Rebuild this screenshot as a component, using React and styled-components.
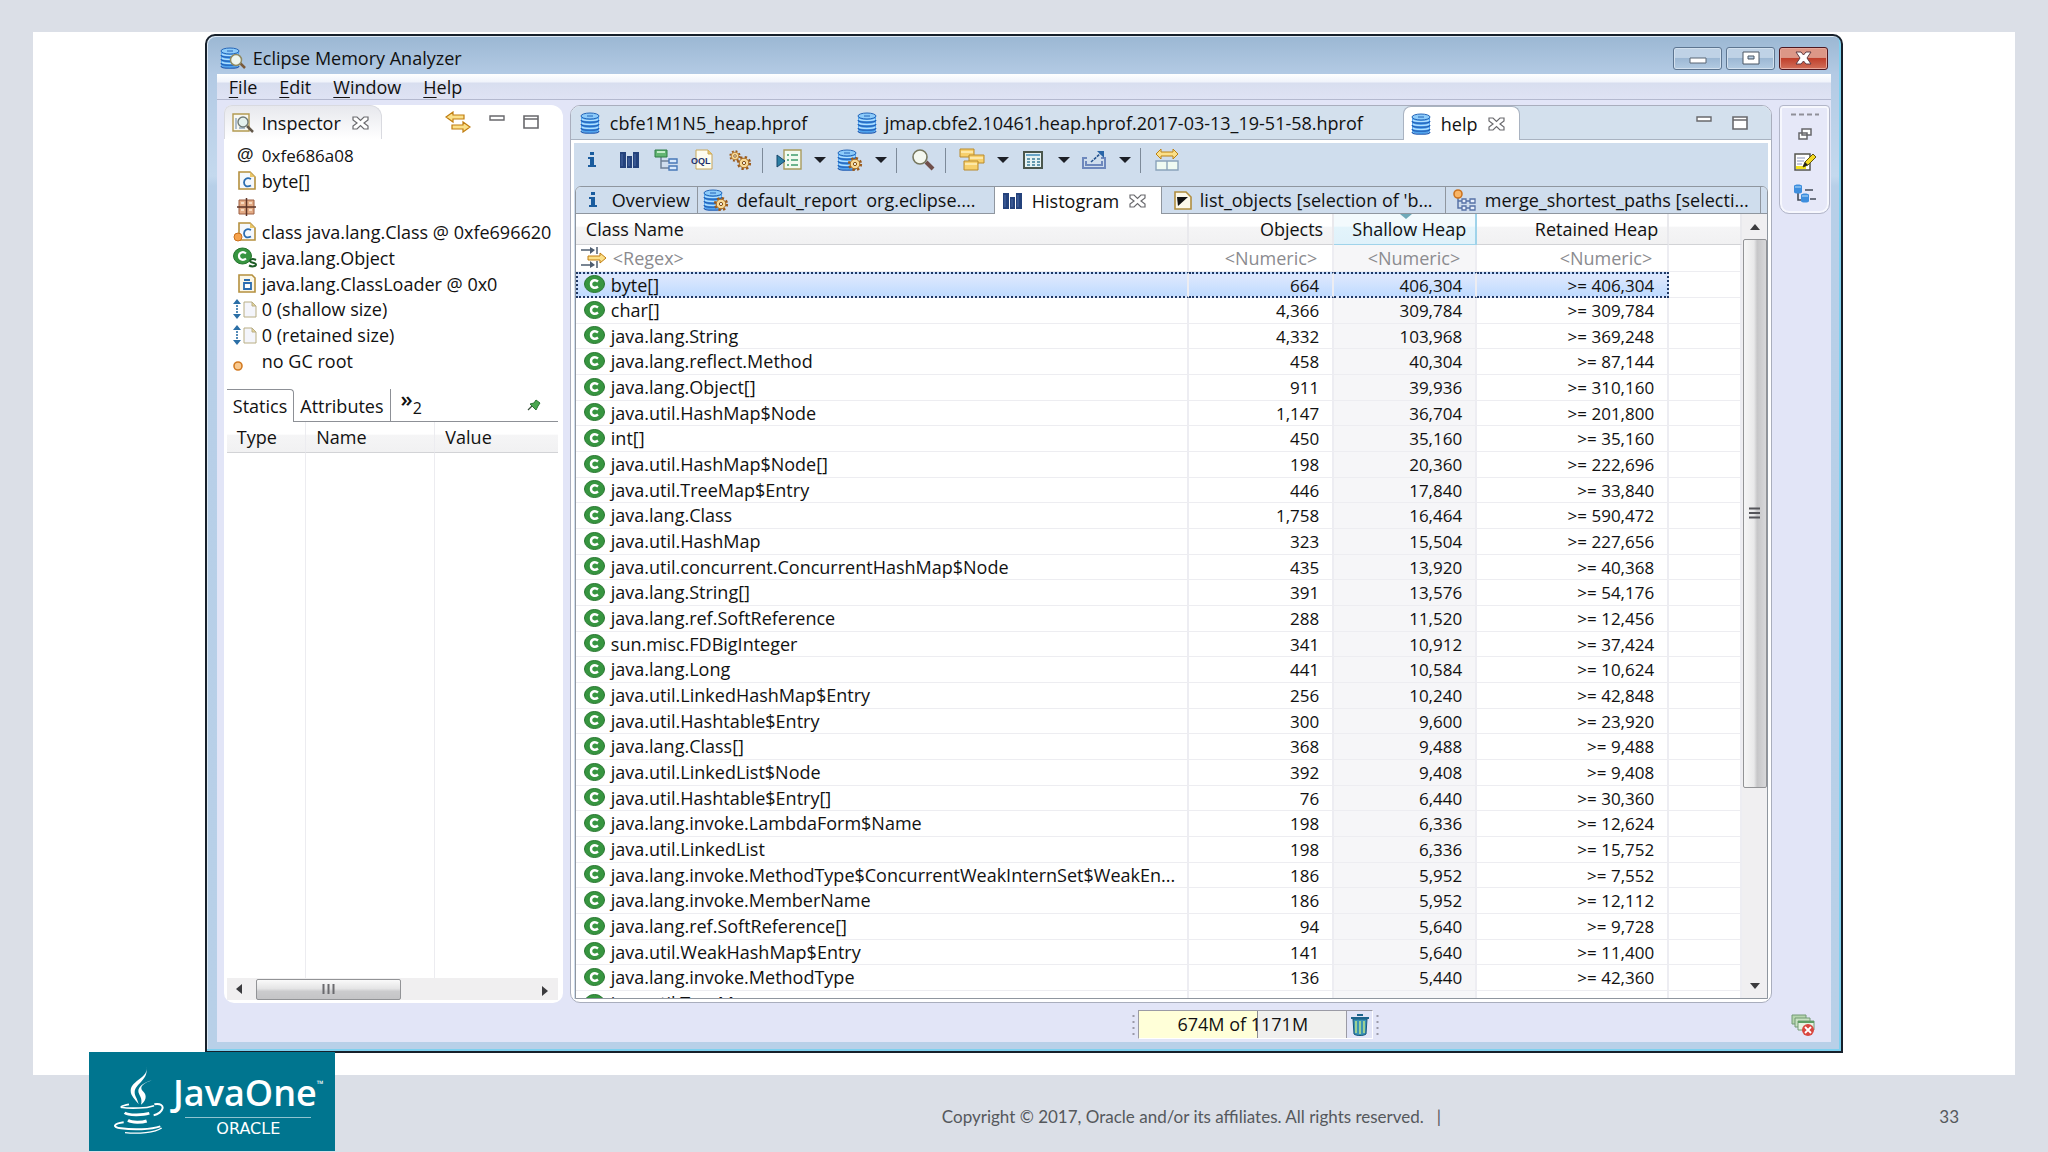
import React from "react";
import styled, { createGlobalStyle, css } from "styled-components";

const GlobalStyle = createGlobalStyle`
  * {
    box-sizing: border-box;
  }
  body {
    margin: 0;
    background: #dbdfe7;
    color: #111;
    font-family: "Open Sans", "Noto Sans", sans-serif;
    font-size: 18px;
  }
  button {
    font: inherit;
    color: inherit;
    background: none;
    border: 0;
    padding: 0;
  }
  svg {
    display: block;
    flex: none;
  }
`;

// slide
const Page = styled.div`
  height: 100vh;
  display: flex;
  flex-direction: column;
`;

const Slide = styled.main`
  flex: 1;
  min-height: 0;
  display: flex;
  justify-content: center;
  margin: 32px 33px 0;
  padding: 2px 0 22px;
  background: #fff;
`;

const Footer = styled.footer`
  position: relative;
  height: 77px;
  flex: none;
  display: grid;
  grid-template-columns: 1fr auto 1fr;
  align-items: center;
  padding: 6px 89px 0 444px;
  font-family: Lato, sans-serif;
  font-size: 17px;
  color: #55585c;

  span:last-child {
    text-align: right;
  }
`;

const Copyright = styled.span`
  grid-column: 2;
  padding-right: 20px;
  white-space: pre;
`;

const Logo = styled.div`
  position: absolute;
  left: 89px;
  bottom: 1px;
  width: 246px;
  height: 99px;
  display: flex;
  gap: 9px;
  padding: 14px 0 0 25px;
  background: #00758f;
  color: #fff;
`;

const LogoText = styled.div`
  display: flex;
  flex-direction: column;
  align-items: center;
  font-family: "Open Sans", sans-serif;
  font-size: 36px;
  line-height: 48px;
  font-weight: 600;
  padding-top: 3px;

  div {
    display: flex;
  }
  sup {
    font-size: 9px;
    line-height: 30px;
  }
  small {
    border-top: 1px solid #8fc4d0;
    width: 126px;
    text-align: center;
    font-family: "DejaVu Sans", sans-serif;
    font-weight: 400;
    font-size: 16px;
    line-height: 22px;
  }
`;

// window frame
const Window = styled.section`
  width: 80vw;
  display: flex;
  flex-direction: column;
  border: 2px solid #17202b;
  border-radius: 10px 10px 0 0;
  padding: 0 10px 9px;
  background: linear-gradient(#9bb7d3, #b3cae4 38px, #c4d9ee 140px, #b7cfe8 150px, #b8d0e8);
  box-shadow: inset -2px -2px 0 #7fd0ee, inset 1px 1px 0 #dce9f5;
`;

const TitleBar = styled.header`
  height: 38px;
  flex: none;
  display: flex;
  align-items: center;
  gap: 7px;
  padding: 6px 3px 0;

  h1 {
    flex: 1;
    margin: 0;
    font-size: 18px;
    font-weight: 400;
  }
`;

const WindowButtons = styled.div`
  display: flex;
  gap: 4px;
`;

const WindowButton = styled.button`
  width: 49px;
  height: 23px;
  display: flex;
  align-items: center;
  justify-content: center;
  border: 1px solid ${(p) => (p.$close ? "#4e1820" : "#5d7590")};
  border-radius: 3px;
  box-shadow: inset 0 0 0 1px ${(p) => (p.$close ? "#e8a79a" : "#d3e1ef")};
  background: ${(p) =>
    p.$close
      ? "linear-gradient(#dc9787 45%, #c0402c 50%, #d2705a)"
      : "linear-gradient(#bfd2e6 45%, #9db8d4 50%, #b3cbe2)"};
`;

const Client = styled.div`
  flex: 1;
  min-height: 0;
  display: flex;
  flex-direction: column;
  background: #e2e5f7;
`;

const MenuBar = styled.nav`
  display: flex;
  gap: 22px;
  height: 26px;
  flex: none;
  padding-left: 12px;
  border-bottom: 1px solid #b4b9cf;
  background: linear-gradient(#fff, #f0f3fb 8px, #d8deef 9px, #dfe3f4);

  u {
    text-underline-offset: 3px;
  }
`;

const Workbench = styled.div`
  flex: 1;
  min-height: 0;
  display: flex;
  gap: 7px;
  padding: 5px 1px 0 7px;
`;

// inspector view
const Inspector = styled.aside`
  width: 339px;
  flex: none;
  display: flex;
  flex-direction: column;
  padding-bottom: 3px;
  background: #fff;
  border-radius: 8px 12px 10px 10px;
`;

const ViewHeader = styled.div`
  height: 34px;
  flex: none;
  display: flex;
  align-items: flex-start;
  padding-right: 24px;
`;

const ViewTab = styled.div`
  width: 158px;
  height: 34px;
  display: flex;
  align-items: center;
  gap: 8px;
  padding-left: 7px;
  margin-right: auto;
  border-radius: 8px 12px 0 0;
  border: 1px solid #d9dae0;
  border-bottom: 0;
  background: linear-gradient(#e7e8ed, #fff);

  button {
    margin-left: 3px;
  }
`;

const ViewActions = styled.div`
  display: flex;
  align-items: center;
  gap: 18px;
  height: 34px;
`;

const Facts = styled.ul`
  list-style: none;
  margin: 0;
  padding: 3px 0 16px 9px;
`;

const Fact = styled.li`
  height: 26px;
  display: flex;
  align-items: center;
  gap: 5px;
  white-space: nowrap;
  font-size: ${(p) => (p.$hex ? 17 : 18)}px;

  &:nth-child(3n) {
    height: 25px;
  }
`;

const FieldTabs = styled.div`
  display: flex;
  flex: none;
  height: 33px;
  margin: 0 5px 0 3px;
  border-bottom: 1px solid #8d9096;
`;

const FieldTab = styled.button`
  height: 33px;
  padding: 0 6px;
  border-right: 1px solid #8d9096;
  ${(p) =>
    p.$active &&
    css`
      border-top: 1px solid #8d9096;
      border-top-right-radius: 4px;
      background: #fff;
    `}
`;

const MoreTabs = styled.button`
  display: flex;
  margin: 0 auto 0 10px;
  font-size: 22px;
  font-weight: 600;
  line-height: 18px;

  sub {
    font-size: 16px;
    font-weight: 400;
    line-height: 38px;
    vertical-align: baseline;
  }
`;

const PinButton = styled.button`
  margin-right: 17px;
`;

const FieldGrid = styled.div`
  flex: 1;
  min-height: 0;
  display: flex;
  margin: 0 5px 0 3px;
`;

const FieldTable = styled.table`
  width: 100%;
  table-layout: fixed;
  border-collapse: separate;
  border-spacing: 0;

  th,
  td {
    border-right: 1px solid #ececf0;
  }
  th {
    height: 31px;
    padding: 0 0 0 10px;
    text-align: left;
    font-weight: 400;
    border-bottom: 1px solid #d2d3d6;
    background: linear-gradient(#fff 40%, #f5f5f6 45%, #f1f1f2);
  }
  th:last-child,
  td:last-child {
    border-right: 0;
  }
`;

// scroll bars
const HScroll = styled.div`
  display: flex;
  align-items: center;
  flex: none;
  height: 22px;
  margin: 0 5px 0 3px;
  background: #f0eff0;
`;

const VScroll = styled.div`
  width: 25px;
  flex: none;
  display: flex;
  flex-direction: column;
  align-items: center;
  background: #f0eff1;
`;

const ScrollArrow = styled.button`
  width: 25px;
  height: 25px;
  flex: none;
  display: flex;
  align-items: center;
  justify-content: center;

  &:last-child {
    margin-top: auto;
  }
`;

const Thumb = styled.div`
  display: flex;
  align-items: center;
  justify-content: center;
  border: 1px solid #929396;
  border-radius: 2px;
  ${(p) =>
    p.$vertical
      ? css`
          width: 24px;
          height: 70%;
          background: linear-gradient(90deg, #f6f6f6, #e9e9ea 45%, #c6c6c8 60%, #d8d8da);
        `
      : css`
          width: 44%;
          height: 21px;
          margin-left: 4px;
          margin-right: auto;
          background: linear-gradient(#fafafa, #e4e4e5 45%, #cbcbcd 60%, #c4c4c6);
        `}
`;

// editor area
const Editor = styled.section`
  flex: 1;
  min-width: 0;
  display: flex;
  flex-direction: column;
  border: 1px solid #a9aebd;
  border-radius: 10px;
  overflow: hidden;
  background: #fff;
`;

const EditorTabs = styled.div`
  height: 34px;
  flex: none;
  display: flex;
  padding-right: 23px;
  border-bottom: 1px solid #a9b3c1;
  background: #d3e0ed;
`;

const EditorTab = styled.button`
  display: flex;
  align-items: center;
  gap: ${(p) => p.$gap || 10}px;
  width: ${(p) => p.$width}px;
  height: ${(p) => (p.$active ? 34 : 33)}px;
  padding-left: ${(p) => (p.$active ? 7 : 9)}px;
  white-space: nowrap;
  ${(p) =>
    p.$active &&
    css`
      background: #fff;
      border: 1px solid #a9b3c1;
      border-bottom: 0;
      border-radius: 8px 8px 0 0;
    `}
`;

const EditorActions = styled.div`
  display: flex;
  align-items: center;
  gap: 20px;
  margin-left: auto;
`;

const EditorBody = styled.div`
  flex: 1;
  min-height: 0;
  display: flex;
  flex-direction: column;
  margin: 3px;
  background: #cfdded;
`;

const Toolbar = styled.div`
  height: 43px;
  flex: none;
  display: flex;
  padding-bottom: 9px;
`;

const ToolButton = styled.button`
  width: ${(p) => (p.$arrow ? 24 : 37)}px;
  display: flex;
  align-items: center;
  justify-content: center;
`;

const Separator = styled.span`
  width: 1px;
  height: 25px;
  margin: 5px 8px 0 3px;
  background: #7d8a99;
`;

const Pages = styled.div`
  flex: 1;
  min-height: 0;
  display: flex;
  flex-direction: column;
  margin-left: 1px;
  border: 1px solid #8f969f;
  border-radius: 6px 6px 0 0;
  overflow: hidden;
  background: #fff;
`;

const PageTabs = styled.div`
  height: 27px;
  flex: none;
  display: flex;
  border-bottom: 1px solid #8f969f;
  background: #cfdded;
`;

const PageTab = styled.button`
  display: flex;
  align-items: center;
  gap: ${(p) => p.$gap || 8}px;
  width: ${(p) => p.$width}px;
  height: ${(p) => (p.$active ? 27 : 26)}px;
  padding-left: ${(p) => p.$pad || 8}px;
  border-right: 1px solid #8f969f;
  white-space: nowrap;
  background: ${(p) => (p.$active ? "#fff" : "none")};
`;

const Viewport = styled.div`
  flex: 1;
  min-height: 0;
  display: flex;
`;

const TableClip = styled.div`
  flex: 1;
  overflow: hidden;
`;

const Histogram = styled.table`
  width: 100%;
  table-layout: fixed;
  border-collapse: separate;
  border-spacing: 0;
  white-space: nowrap;

  tbody tr td {
    height: 26px;
  }
  tbody tr:nth-child(3n) td {
    height: 25px;
  }
`;

const HeadCell = styled.th`
  height: 31px;
  padding: 0 9px 0 10px;
  font-weight: 400;
  text-align: ${(p) => (p.$num ? "right" : "left")};
  border-right: 2px solid #e9e9ed;
  border-bottom: 1px solid #d2d3d6;
  background: linear-gradient(#fff 40%, #f5f5f6 45%, #f1f1f2);
  ${(p) =>
    p.$sorted &&
    css`
      position: relative;
      border-color: #9fd3ea;
      background: linear-gradient(#f3fafd 40%, #e3f4fb 45%, #dff1fa);
      svg {
        position: absolute;
        top: 0;
        left: 66px;
      }
    `}
`;

const Cell = styled.td`
  padding: 0 13px 0 8px;
  line-height: 23px;
  font-size: ${(p) => (p.$num ? 17 : 18)}px;
  text-align: ${(p) => (p.$num ? "right" : "left")};
  border-right: 2px solid #ededf2;
  border-bottom: 1px solid #ededf1;
  background: ${(p) => (p.$sorted ? "#f6f6f8" : "#fff")};
  overflow: hidden;
  ${(p) =>
    p.$selected &&
    css`
      border-top: 2px dotted #1f3864;
      border-bottom: 2px dotted #1f3864;
      line-height: 21px;
      background: linear-gradient(#e0e9fd, #bfdbff);

      &:first-child {
        border-left: 2px dotted #1f3864;
        padding-left: 6px;
      }
      &:nth-child(4) {
        border-right: 2px dotted #1f3864;
      }
    `}
`;

const NameBox = styled.div`
  display: flex;
  align-items: center;
  gap: 6px;
`;

const FilterCell = styled.td`
  height: 27px;
  padding: 0 15px 0 5px;
  border-right: 2px solid #ededf2;
  border-bottom: 1px solid #ededf1;
  background: ${(p) => (p.$sorted ? "#f6f6f8" : "#fff")};
`;

const FilterInput = styled.input`
  display: block;
  width: 100%;
  min-width: 0;
  padding: 0;
  border: 0;
  background: none;
  font: inherit;
  line-height: 24px;
  text-align: ${(p) => (p.$num ? "right" : "left")};

  &::placeholder {
    color: #8b8b8f;
    opacity: 1;
  }
`;

// right trim and status line
const Trim = styled.div`
  width: 51px;
  height: 109px;
  flex: none;
  display: flex;
  flex-direction: column;
  align-items: center;
  gap: 12px;
  padding-top: 7px;
  border: 1px solid #b2b6c8;
  border-radius: 4px 4px 10px 10px;
  background: #e6e8f8;
  box-shadow: inset 0 0 0 2px #f6f7fd;
`;

const Status = styled.footer`
  height: 39px;
  flex: none;
  display: grid;
  grid-template-columns: 21fr auto 10fr;
  align-items: center;
  padding: 4px 16px 0 0;

  > button {
    justify-self: end;
  }
`;

const Heap = styled.div`
  grid-column: 2;
  display: flex;
  align-items: center;
  gap: 3px;
`;

const HeapBox = styled.div`
  display: flex;
  border: 1px solid #9b9ba5;
  border-right-color: #fff;
  border-bottom-color: #fff;

  button {
    width: 26px;
    height: 27px;
    display: flex;
    align-items: center;
    justify-content: center;
    border-left: 1px solid #9b9ba5;
  }
`;

const HeapMeter = styled.div`
  position: relative;
  width: 207px;
  height: 27px;
  background: #f0f0ee;
  text-align: center;
  line-height: 27px;

  span {
    position: relative;
  }
`;

const HeapUsed = styled.div`
  position: absolute;
  inset: 0 auto 0 0;
  background: #ffffd8;
  border-right: 1px solid #8d8d92;
`;

const Svg = ({ w = 24, h = 24, children, ...rest }) => (
  <svg width={w} height={h} viewBox={`0 0 ${w} ${h}`} fill="none" aria-hidden="true" {...rest}>
    {children}
  </svg>
);

const Cylinder = () => (
  <g>
    <path d="M1 4v14c0 4 18 4 18 0V4z" fill="#4fa3ee" />
    <path
      d="M1 8c0 3 18 3 18 0M1 12c0 3 18 3 18 0M1 16c0 3 18 3 18 0M1 19c0 3 18 3 18 0"
      stroke="#1f5cb4"
      strokeWidth="1.200"
    />
    <path
      d="M2 7c2 2 14 2 16 0M2 11c2 2 14 2 16 0M2 15c2 2 14 2 16 0"
      stroke="#b4e1ff"
      strokeWidth="1.200"
    />
    <ellipse cx="10" cy="4" rx="9" ry="3" fill="#8ccbfa" stroke="#2465b8" />
    <path d="M7 4h6" stroke="#2465b8" />
  </g>
);

const Cog = ({ x, y, s = 1 }) => (
  <g transform={`translate(${x} ${y}) scale(${s})`}>
    <circle r="5.800" stroke="#9b5a1c" strokeWidth="2.600" strokeDasharray="2.300 2.255" />
    <circle r="4.800" fill="#f8d995" stroke="#a86a20" />
    <circle r="1.600" fill="#fff" stroke="#7d4a12" />
  </g>
);

const DbIcon = () => (
  <Svg w={20} h={22}>
    <Cylinder />
  </Svg>
);

const DbSearchIcon = () => (
  <Svg w={26} h={22}>
    <Cylinder />
    <path d="M20 16l5 5" stroke="#7a5a3a" strokeWidth="2.500" />
    <circle cx="16" cy="13" r="5.500" fill="#eef6ee" stroke="#8f8a63" strokeWidth="1.500" />
  </Svg>
);

const DbCogIcon = () => (
  <Svg w={26} h={22}>
    <Cylinder />
    <Cog x={18} y={15} />
  </Svg>
);

const InfoIcon = () => (
  <Svg w={10} h={18}>
    <path d="M3 1h4v3H3zM1 6h6v8h2v2H1v-2h2V8H1z" fill="#1a5c9e" />
  </Svg>
);

const BarsIcon = () => (
  <Svg w={19} h={18}>
    <path d="M0 1h6v16H0zM7 5h5v12H7zM13 1h6v16h-6z" fill="#24427c" />
    <path d="M2 3v12M9 7v8M15 3v12" stroke="#4a6ba6" />
  </Svg>
);

const TreeIcon = () => (
  <Svg w={24} h={24}>
    <path d="M7 9v11h8M7 13h8" stroke="#6f8096" strokeWidth="1.500" />
    <path d="M1 2h12v7H1z" fill="#63b572" stroke="#2f7d45" />
    <path d="M3 4h8" stroke="#c4ecc9" strokeWidth="2" />
    <path d="M15 11h8v4h-8zM15 18h8v4h-8z" fill="#d8e9fc" stroke="#4878b8" strokeWidth="1.400" />
  </Svg>
);

const OqlIcon = () => (
  <Svg w={24} h={22}>
    <path d="M5 1h12l4 4v15H5z" fill="#fdfcf0" stroke="#c9a75a" />
    <path d="M17 1v4h4" fill="#e9c66a" stroke="#c9a75a" />
    <text x="0" y="15" fontFamily="Liberation Sans, sans-serif" fontSize="9" fontWeight="700" fill="#23306e">
      OQL
    </text>
  </Svg>
);

const CogsIcon = () => (
  <Svg w={24} h={22}>
    <Cog x={7} y={7} s={0.8} />
    <Cog x={16} y={14} />
  </Svg>
);

const QueryIcon = () => (
  <Svg w={26} h={22}>
    <path d="M8 1h17v19H8z" fill="#f2fbf0" stroke="#a89a5c" strokeWidth="1.400" />
    <path d="M11 6h2m2 0h7M11 11h2m2 0h7M11 16h2m2 0h7" stroke="#3f9d6c" strokeWidth="1.500" />
    <path d="M1 6l8 6-8 6z" fill="#2b7fa4" stroke="#17476b" />
  </Svg>
);

const SearchIcon = () => (
  <Svg w={24} h={22}>
    <path d="M15 13l7 7" stroke="#6f4f4a" strokeWidth="4" />
    <circle cx="9" cy="8" r="7" fill="#f4f8f0" stroke="#77785f" strokeWidth="1.600" />
  </Svg>
);

const GroupIcon = () => (
  <Svg w={26} h={24}>
    <g fill="#f7d06c" stroke="#b98a2c">
      <path d="M1 1h14v8H1z" />
      <path d="M10 7h15v8H10z" />
      <path d="M5 13h14v9H5z" />
    </g>
    <path d="M2 4h12M11 10h13M6 16h12" stroke="#fff0bc" strokeWidth="1.500" />
  </Svg>
);

const CalcIcon = () => (
  <Svg w={20} h={18}>
    <path d="M1 1h18v16H1z" fill="#e6f3f4" stroke="#4a564c" strokeWidth="2" />
    <path d="M3 4h14" stroke="#69a5c8" strokeWidth="2" />
    <path d="M4 8h3m2 0h3m2 0h3M4 11h3m2 0h3m2 0h3M4 14h3m2 0h3m2 0h3" stroke="#3d7e96" strokeWidth="1.500" />
  </Svg>
);

const ExportIcon = () => (
  <Svg w={26} h={22}>
    <path d="M6 9H2v10h22V9h-4M5 12v4h16v-4" stroke="#6e88bd" strokeWidth="2" />
    <path d="M10 13L20 4" stroke="#27548f" strokeWidth="1.600" strokeDasharray="3 1" />
    <path d="M16 2h7v7z" fill="#2a66a8" />
  </Svg>
);

const CompareIcon = () => (
  <Svg w={24} h={24}>
    <path d="M1 6l5-5v3h12V1l5 5-5 5V8H6v3z" fill="#fbe08a" stroke="#bb8214" />
    <path d="M1 13h22v9H1zM12 13v9" fill="#effaf2" stroke="#8aa3ba" strokeWidth="1.400" />
  </Svg>
);

const DropArrow = () => (
  <Svg w={12} h={6}>
    <path d="M0 0h12L6 6z" fill="#1c1f26" />
  </Svg>
);

const CloseIcon = () => (
  <Svg w={17} h={14}>
    <path
      d="M1 1h4l3.500 3.500L12 1h4v3l-4 3 4 3v3h-4L8.500 9.500 5 13H1v-3l4-3-4-3z"
      fill="#fff"
      stroke="#6a6a6e"
      strokeWidth="1.200"
    />
  </Svg>
);

const MinIcon = () => (
  <Svg w={16} h={14}>
    <path d="M1 1h14v4H1z" fill="#fff" stroke="#68686c" strokeWidth="1.400" />
  </Svg>
);

const MaxIcon = () => (
  <Svg w={16} h={14}>
    <path d="M1 1h14v12H1zM1 4h14" fill="#fff" stroke="#68686c" strokeWidth="1.600" />
  </Svg>
);

const InspectorIcon = () => (
  <Svg w={22} h={20}>
    <path d="M1 1h16v17H1z" fill="#f8f8f2" stroke="#b39a52" strokeWidth="1.400" />
    <path d="M4 5v11M7 15h6" stroke="#8fa6bd" strokeWidth="1.400" />
    <path d="M15 13l6 6" stroke="#63584a" strokeWidth="2.500" />
    <circle cx="11" cy="9" r="5" fill="#e4f1ee" stroke="#6f7a76" strokeWidth="1.400" />
  </Svg>
);

const SyncIcon = () => (
  <Svg w={26} h={22}>
    <path d="M1 6l7-5v3h11v4H8v3z" fill="#fbe08a" stroke="#c07d10" strokeWidth="1.200" />
    <path d="M25 16l-7-5v3H7v4h11v3z" fill="#fbe08a" stroke="#c07d10" strokeWidth="1.200" />
  </Svg>
);

const AtIcon = () => (
  <Svg w={24} h={20}>
    <text x="4" y="15" fontFamily="Liberation Sans, sans-serif" fontSize="17" fontWeight="700" fill="#222">
      @
    </text>
  </Svg>
);

const FileClassIcon = ({ dot }) => (
  <Svg w={24} h={20}>
    <path d="M6 1h11l5 5v12H6z" fill="#f4f8fd" stroke="#b5903e" strokeWidth="1.600" />
    <path d="M17 1v5h5z" fill="#e9c66a" />
    <path d="M18 8c-4-2-7 0-7 3.500s3 5 7 3" stroke="#2a6cb0" strokeWidth="1.800" />
    {dot && <circle cx="5" cy="15" r="4" fill="#f5a24c" stroke="#c96f1b" />}
  </Svg>
);

const PackageIcon = () => (
  <Svg w={24} h={20}>
    <path d="M6 3h15v14H6z" fill="#e3ab85" stroke="#9c5f43" />
    <path d="M13.500 1v18M4 10h19" stroke="#5f3527" strokeWidth="1.500" />
    <path d="M8 6h3m5 0h3M8 13h3m5 0h3" stroke="#f6d9bf" strokeWidth="2" />
  </Svg>
);

const ClassIcon = () => (
  <Svg w={21} h={20}>
    <ellipse cx="10.500" cy="9" rx="10" ry="8.500" fill="#379540" stroke="#27762f" />
    <path d="M14 6.500c-3-2.500-7-1-7 2.500s4 5 7 2.500" stroke="#fff" strokeWidth="2.400" />
  </Svg>
);

const SuperClassIcon = () => (
  <Svg w={24} h={22}>
    <ellipse cx="9.500" cy="9" rx="9" ry="8" fill="#379540" stroke="#27762f" />
    <path d="M13 6.500c-3-2.500-7-1-7 2.500s4 5 7 2.500" stroke="#fff" strokeWidth="2.200" />
    <path d="M23 13c-3-1.500-6-1-6 1s6 1.500 6 3.500-4 2.500-7 1" stroke="#1d5c26" strokeWidth="2" />
  </Svg>
);

const LoaderIcon = () => (
  <Svg w={24} h={20}>
    <path d="M6 1h13l3 3v14H6z" fill="#fbf7e8" stroke="#b5903e" strokeWidth="1.600" />
    <path d="M11 9h7v6h-7z" fill="#fff" stroke="#2a6cb0" strokeWidth="1.800" />
    <path d="M11 6h6" stroke="#2a6cb0" strokeWidth="2" />
  </Svg>
);

const SizeIcon = () => (
  <Svg w={24} h={20}>
    <path d="M4 3v14" stroke="#2b6fa6" strokeWidth="1.600" strokeDasharray="2 1" />
    <path d="M0 5l4-5 4 5zM0 15l4 5 4-5z" fill="#2b6fa6" />
    <path d="M11 3h8l4 4v11H11z" fill="#f4f5fb" stroke="#b9ae84" />
    <path d="M19 3v4h4z" fill="#e9d79a" stroke="#b9ae84" />
  </Svg>
);

const RootIcon = () => (
  <Svg w={24} h={20}>
    <circle cx="5" cy="15" r="4" fill="#f9c98f" stroke="#d27a22" strokeWidth="1.600" />
  </Svg>
);

const PinIcon = () => (
  <Svg w={14} h={12}>
    <path d="M1 11l5-5" stroke="#39503c" strokeWidth="1.200" />
    <path d="M3 5l4-1 2-3 4 3-2 3-2 4z" fill="#4aa650" stroke="#2a7434" />
  </Svg>
);

const ListObjectsIcon = () => (
  <Svg w={18} h={19}>
    <path d="M1 1h11l5 5v12H1z" fill="#fbf8ea" stroke="#b08d3e" strokeWidth="1.600" />
    <path d="M3 6h11L4 15z" fill="#111" />
  </Svg>
);

const PathsIcon = () => (
  <Svg w={24} h={22}>
    <path d="M5 8v11h5M5 12h17M10 19h12" stroke="#5772a6" strokeWidth="1.500" />
    <path d="M9 10h4v4H9zM17 10h5v4h-5zM9 17h4v4H9zM17 17h5v4h-5z" fill="#e8effb" stroke="#5772a6" strokeWidth="1.300" />
    <circle cx="5" cy="5" r="4" fill="#f9b566" stroke="#cc7420" strokeWidth="1.600" />
  </Svg>
);

const RegexIcon = () => (
  <Svg w={26} h={22}>
    <path d="M0 3h12M0 18h12M16 0v7M16 14v7" stroke="#4e5d70" strokeWidth="1.500" />
    <path d="M9 0l5 3-5 4zM9 14l5 4-5 3z" fill="#4e5d70" />
    <path d="M7 9h12V6l6 5-6 5v-3H7z" fill="#fbe08a" stroke="#c07d10" />
  </Svg>
);

const RestoreIcon = () => (
  <Svg w={14} h={12}>
    <path d="M4 1h9v6H4zM1 5h8v6H1z" fill="#fff" stroke="#66666a" strokeWidth="1.500" />
  </Svg>
);

const NotesIcon = () => (
  <Svg w={22} h={20}>
    <path d="M1 2h15v16H1z" fill="#fff" stroke="#55554f" strokeWidth="1.500" />
    <path d="M3 6h8M3 9h7M3 12h5" stroke="#8a93b8" />
    <path d="M2 14h10v3H2z" fill="#f2e21f" />
    <path d="M9 15l2-5 8-8 3 3-8 8z" fill="#f4d921" stroke="#5e540f" />
    <path d="M9 15l2-5 3 3z" fill="#222" />
  </Svg>
);

const NavIcon = () => (
  <Svg w={22} h={20}>
    <path d="M4 8v8h4M11 6h8M16 15h6" stroke="#444b58" strokeWidth="1.600" />
    <path d="M0 2c0-2 8-2 8 0v6c0 2-8 2-8 0zM7 11c0-2 8-2 8 0v6c0 2-8 2-8 0z" fill="#3d8ede" />
    <path d="M1 3h6M8 12h6" stroke="#b9defa" />
  </Svg>
);

const TrashIcon = () => (
  <Svg w={18} h={22}>
    <path d="M2 5h14l-1 15c-2 2-10 2-12 0z" fill="#3b92b4" stroke="#17577c" />
    <path d="M5 7v12M9 7v13M13 7v12" stroke="#b6e08c" strokeWidth="1.600" />
    <path d="M0 4h18M6 1h6" stroke="#1d648c" strokeWidth="2" />
  </Svg>
);

const ErrorsIcon = () => (
  <Svg w={24} h={22}>
    <path d="M1 1h14v9H1z" fill="#b5d5ae" stroke="#739a75" />
    <path d="M4 4h15v9H4z" fill="#c8e2c2" stroke="#739a75" />
    <path d="M7 7h16v9H7z" fill="#e6f3e2" stroke="#739a75" />
    <path d="M7 8h16" stroke="#5e9d63" strokeWidth="2" />
    <circle cx="17" cy="16" r="6" fill="#d9473f" />
    <path d="M14 13l6 6M20 13l-6 6" stroke="#fff" strokeWidth="1.800" />
  </Svg>
);

const Dots = () => (
  <Svg w={3} h={24}>
    <path d="M1.500 2v22" stroke="#9a9aa8" strokeWidth="2" strokeDasharray="2 4" />
  </Svg>
);

const JavaCup = () => (
  <svg width="50" height="69" viewBox="160 318 150 207" fill="none" stroke="#fff" aria-hidden="true">
    <path d="M256 319c12 34-46 42-46 73 0 16 14 26 24 41-4-18-12-24-12-36 0-26 46-38 34-78z" fill="#fff" stroke="none" />
    <path d="M273 361c-26 8-40 20-40 32s14 20 8 41c10-8 14-16 14-24 0-14-13-16-13-26 0-8 12-16 31-23z" fill="#fff" stroke="none" />
    <path d="M205 433c-50 10-10 12 30 11 20 0 34-3 45-7" strokeWidth="5" />
    <path d="M281 433c40-6 26 28-2 33" strokeWidth="6" />
    <path d="M192 458c10 9 55 8 74 2" strokeWidth="8" />
    <path d="M202 481c12 8 42 7 56 2" strokeWidth="9" />
    <path d="M189 487c-30 4-36 14-8 18 36 5 90 4 118-6" strokeWidth="6" />
    <path d="M193 518c40 4 90 0 110-14" strokeWidth="4" />
  </svg>
);

const facts = [
  [<AtIcon />, "0xfe686a08"],
  [<FileClassIcon />, "byte[]"],
  [<PackageIcon />, ""],
  [<FileClassIcon dot />, "class java.lang.Class @ 0xfe696620"],
  [<SuperClassIcon />, "java.lang.Object"],
  [<LoaderIcon />, "java.lang.ClassLoader @ 0x0"],
  [<SizeIcon />, "0 (shallow size)"],
  [<SizeIcon />, "0 (retained size)"],
  [<RootIcon />, "no GC root"],
];

const rows = [
  ["byte[]", "664", "406,304", "406,304"],
  ["char[]", "4,366", "309,784", "309,784"],
  ["java.lang.String", "4,332", "103,968", "369,248"],
  ["java.lang.reflect.Method", "458", "40,304", "87,144"],
  ["java.lang.Object[]", "911", "39,936", "310,160"],
  ["java.util.HashMap$Node", "1,147", "36,704", "201,800"],
  ["int[]", "450", "35,160", "35,160"],
  ["java.util.HashMap$Node[]", "198", "20,360", "222,696"],
  ["java.util.TreeMap$Entry", "446", "17,840", "33,840"],
  ["java.lang.Class", "1,758", "16,464", "590,472"],
  ["java.util.HashMap", "323", "15,504", "227,656"],
  ["java.util.concurrent.ConcurrentHashMap$Node", "435", "13,920", "40,368"],
  ["java.lang.String[]", "391", "13,576", "54,176"],
  ["java.lang.ref.SoftReference", "288", "11,520", "12,456"],
  ["sun.misc.FDBigInteger", "341", "10,912", "37,424"],
  ["java.lang.Long", "441", "10,584", "10,624"],
  ["java.util.LinkedHashMap$Entry", "256", "10,240", "42,848"],
  ["java.util.Hashtable$Entry", "300", "9,600", "23,920"],
  ["java.lang.Class[]", "368", "9,488", "9,488"],
  ["java.util.LinkedList$Node", "392", "9,408", "9,408"],
  ["java.util.Hashtable$Entry[]", "76", "6,440", "30,360"],
  ["java.lang.invoke.LambdaForm$Name", "198", "6,336", "12,624"],
  ["java.util.LinkedList", "198", "6,336", "15,752"],
  ["java.lang.invoke.MethodType$ConcurrentWeakInternSet$WeakEn...", "186", "5,952", "7,552"],
  ["java.lang.invoke.MemberName", "186", "5,952", "12,112"],
  ["java.lang.ref.SoftReference[]", "94", "5,640", "9,728"],
  ["java.util.WeakHashMap$Entry", "141", "5,640", "11,400"],
  ["java.lang.invoke.MethodType", "136", "5,440", "42,360"],
  ["java.util.TreeMap", "111", "5,328", "35,936"],
];

const tools = [
  { name: "Overview", icon: <InfoIcon /> },
  { name: "Histogram", icon: <BarsIcon /> },
  { name: "Dominator tree", icon: <TreeIcon /> },
  { name: "OQL", icon: <OqlIcon /> },
  { name: "Thread overview", icon: <CogsIcon /> },
  null,
  { name: "Run report", icon: <QueryIcon />, menu: true },
  { name: "Query browser", icon: <DbCogIcon />, menu: true },
  null,
  { name: "Find object", icon: <SearchIcon /> },
  null,
  { name: "Group result", icon: <GroupIcon />, menu: true },
  { name: "Calculate retained size", icon: <CalcIcon />, menu: true },
  { name: "Export", icon: <ExportIcon />, menu: true },
  null,
  { name: "Compare", icon: <CompareIcon /> },
];

const heap = { used: 674, total: 1171 };

const InspectorView = () => (
  <Inspector>
    <ViewHeader>
      <ViewTab>
        <InspectorIcon />
        <span>Inspector</span>
        <button aria-label="Close Inspector">
          <CloseIcon />
        </button>
      </ViewTab>
      <ViewActions>
        <button aria-label="Link with editor">
          <SyncIcon />
        </button>
        <button aria-label="Minimize view">
          <MinIcon />
        </button>
        <button aria-label="Maximize view">
          <MaxIcon />
        </button>
      </ViewActions>
    </ViewHeader>
    <Facts>
      {facts.map(([icon, text], i) => (
        <Fact key={i} $hex={text.startsWith("0x")}>
          {icon}
          <span>{text}</span>
        </Fact>
      ))}
    </Facts>
    <FieldTabs>
      <FieldTab $active>Statics</FieldTab>
      <FieldTab>Attributes</FieldTab>
      <MoreTabs aria-label="More tabs">
        »<sub>2</sub>
      </MoreTabs>
      <PinButton aria-label="Pin">
        <PinIcon />
      </PinButton>
    </FieldTabs>
    <FieldGrid>
      <FieldTable>
        <colgroup>
          <col style={{ width: "24%" }} />
          <col style={{ width: "39%" }} />
          <col />
        </colgroup>
        <thead>
          <tr>
            <th>Type</th>
            <th>Name</th>
            <th>Value</th>
          </tr>
        </thead>
        <tbody>
          <tr>
            <td />
            <td />
            <td />
          </tr>
        </tbody>
      </FieldTable>
    </FieldGrid>
    <HScroll>
      <ScrollArrow aria-label="Scroll left">
        <Svg w={6} h={10}>
          <path d="M6 0v10L0 5z" fill="#3b3b3e" />
        </Svg>
      </ScrollArrow>
      <Thumb>
        <Svg w={13} h={10}>
          <path d="M1.500 0v10M6.500 0v10M11.500 0v10" stroke="#6a6a6e" strokeWidth="2" />
        </Svg>
      </Thumb>
      <ScrollArrow aria-label="Scroll right">
        <Svg w={6} h={10}>
          <path d="M0 0v10l6-5z" fill="#3b3b3e" />
        </Svg>
      </ScrollArrow>
    </HScroll>
  </Inspector>
);

const HistogramTable = () => (
  <Viewport>
    <TableClip>
      <Histogram>
        <colgroup>
          <col />
          <col style={{ width: 145 }} />
          <col style={{ width: 143 }} />
          <col style={{ width: 192 }} />
          <col style={{ width: 73 }} />
        </colgroup>
        <thead>
          <tr>
            <HeadCell>Class Name</HeadCell>
            <HeadCell $num>Objects</HeadCell>
            <HeadCell $num $sorted>
              <Svg w={12} h={6}>
                <path d="M0 0h12L6 5z" fill="#6fa9b8" />
              </Svg>
              Shallow Heap
            </HeadCell>
            <HeadCell $num>Retained Heap</HeadCell>
            <HeadCell as="td" />
          </tr>
          <tr>
            <FilterCell>
              <NameBox>
                <RegexIcon />
                <FilterInput aria-label="Class name filter" placeholder="<Regex>" />
              </NameBox>
            </FilterCell>
            <FilterCell>
              <FilterInput $num aria-label="Objects filter" placeholder="<Numeric>" />
            </FilterCell>
            <FilterCell $sorted>
              <FilterInput $num aria-label="Shallow heap filter" placeholder="<Numeric>" />
            </FilterCell>
            <FilterCell>
              <FilterInput $num aria-label="Retained heap filter" placeholder="<Numeric>" />
            </FilterCell>
            <FilterCell />
          </tr>
        </thead>
        <tbody>
          {rows.map(([name, objects, shallow, retained], i) => {
            const selected = i === 0;
            return (
              <tr key={name}>
                <Cell $selected={selected}>
                  <NameBox>
                    <ClassIcon />
                    {name}
                  </NameBox>
                </Cell>
                <Cell $num $selected={selected}>
                  {objects}
                </Cell>
                <Cell $num $sorted $selected={selected}>
                  {shallow}
                </Cell>
                <Cell $num $selected={selected}>
                  &gt;= {retained}
                </Cell>
                <Cell />
              </tr>
            );
          })}
        </tbody>
      </Histogram>
    </TableClip>
    <VScroll>
      <ScrollArrow aria-label="Scroll up">
        <Svg w={10} h={6}>
          <path d="M0 6h10L5 0z" fill="#3b3b3e" />
        </Svg>
      </ScrollArrow>
      <Thumb $vertical>
        <Svg w={11} h={12}>
          <path d="M0 1.500h11M0 6h11M0 10.500h11" stroke="#55555a" strokeWidth="2" />
        </Svg>
      </Thumb>
      <ScrollArrow aria-label="Scroll down">
        <Svg w={10} h={6}>
          <path d="M0 0h10L5 6z" fill="#3b3b3e" />
        </Svg>
      </ScrollArrow>
    </VScroll>
  </Viewport>
);

const EditorArea = () => (
  <Editor>
    <EditorTabs>
      <EditorTab $width={277}>
        <DbIcon />
        cbfe1M1N5_heap.hprof
      </EditorTab>
      <EditorTab $width={555} $gap={8}>
        <DbIcon />
        jmap.cbfe2.10461.heap.hprof.2017-03-13_19-51-58.hprof
      </EditorTab>
      <EditorTab $active $width={117}>
        <DbIcon />
        help
        <CloseIcon />
      </EditorTab>
      <EditorActions>
        <button aria-label="Minimize editor">
          <MinIcon />
        </button>
        <button aria-label="Maximize editor">
          <MaxIcon />
        </button>
      </EditorActions>
    </EditorTabs>
    <EditorBody>
      <Toolbar>
        {tools.map((tool, i) =>
          tool ? (
            <React.Fragment key={i}>
              <ToolButton aria-label={tool.name}>{tool.icon}</ToolButton>
              {tool.menu && (
                <ToolButton $arrow aria-label={`${tool.name} menu`}>
                  <DropArrow />
                </ToolButton>
              )}
            </React.Fragment>
          ) : (
            <Separator key={i} />
          )
        )}
      </Toolbar>
      <Pages>
        <PageTabs>
          <PageTab $width={122} $pad={12} $gap={14}>
            <InfoIcon />
            Overview
          </PageTab>
          <PageTab $width={297} $pad={5}>
            <DbCogIcon />
            {"default_report\u00a0 org.eclipse...."}
          </PageTab>
          <PageTab $active $width={167} $gap={10}>
            <BarsIcon />
            Histogram
            <CloseIcon />
          </PageTab>
          <PageTab $width={284} $pad={12}>
            <ListObjectsIcon />
            list_objects [selection of 'b...
          </PageTab>
          <PageTab $width={315} $pad={7}>
            <PathsIcon />
            merge_shortest_paths [selecti...
          </PageTab>
        </PageTabs>
        <HistogramTable />
      </Pages>
    </EditorBody>
  </Editor>
);

export default function App() {
  return (
    <Page>
      <GlobalStyle />
      <Slide>
        <Window>
          <TitleBar>
            <DbSearchIcon />
            <h1>Eclipse Memory Analyzer</h1>
            <WindowButtons>
              <WindowButton aria-label="Minimize">
                <Svg w={18} h={14}>
                  <path d="M1 7h16v5H1z" fill="#fff" stroke="#5b6675" />
                </Svg>
              </WindowButton>
              <WindowButton aria-label="Maximize">
                <Svg w={18} h={14}>
                  <path d="M1 1h16v12H1zM6 5h6v3H6z" fill="#fff" fillRule="evenodd" stroke="#4b5665" />
                </Svg>
              </WindowButton>
              <WindowButton $close aria-label="Close">
                <Svg w={17} h={14}>
                  <path d="M1 1h5l2.500 3L11 1h5l-4 6 4 6h-5L8.500 10 6 13H1l4-6z" fill="#fff" stroke="#5e3a42" />
                </Svg>
              </WindowButton>
            </WindowButtons>
          </TitleBar>
          <Client>
            <MenuBar>
              {["File", "Edit", "Window", "Help"].map((item) => (
                <button key={item}>
                  <u>{item[0]}</u>
                  {item.slice(1)}
                </button>
              ))}
            </MenuBar>
            <Workbench>
              <InspectorView />
              <EditorArea />
              <Trim>
                <Svg w={28} h={3}>
                  <path d="M0 1.500h28" stroke="#8f8f98" strokeWidth="2" strokeDasharray="5 3" />
                </Svg>
                <button aria-label="Restore">
                  <RestoreIcon />
                </button>
                <button aria-label="Notes">
                  <NotesIcon />
                </button>
                <button aria-label="Navigation history">
                  <NavIcon />
                </button>
              </Trim>
            </Workbench>
            <Status>
              <Heap>
                <Dots />
                <HeapBox>
                  <HeapMeter>
                    <HeapUsed style={{ width: `${(heap.used / heap.total) * 100}%` }} />
                    <span>
                      {heap.used}M of {heap.total}M
                    </span>
                  </HeapMeter>
                  <button aria-label="Run garbage collector">
                    <TrashIcon />
                  </button>
                </HeapBox>
                <Dots />
              </Heap>
              <button aria-label="Show errors">
                <ErrorsIcon />
              </button>
            </Status>
          </Client>
        </Window>
      </Slide>
      <Footer>
        <Logo>
          <JavaCup />
          <LogoText>
            <div>
              JavaOne<sup>™</sup>
            </div>
            <small>ORACLE</small>
          </LogoText>
        </Logo>
        <Copyright>{"Copyright © 2017, Oracle and/or its affiliates. All rights reserved.   |"}</Copyright>
        <span>33</span>
      </Footer>
    </Page>
  );
}
